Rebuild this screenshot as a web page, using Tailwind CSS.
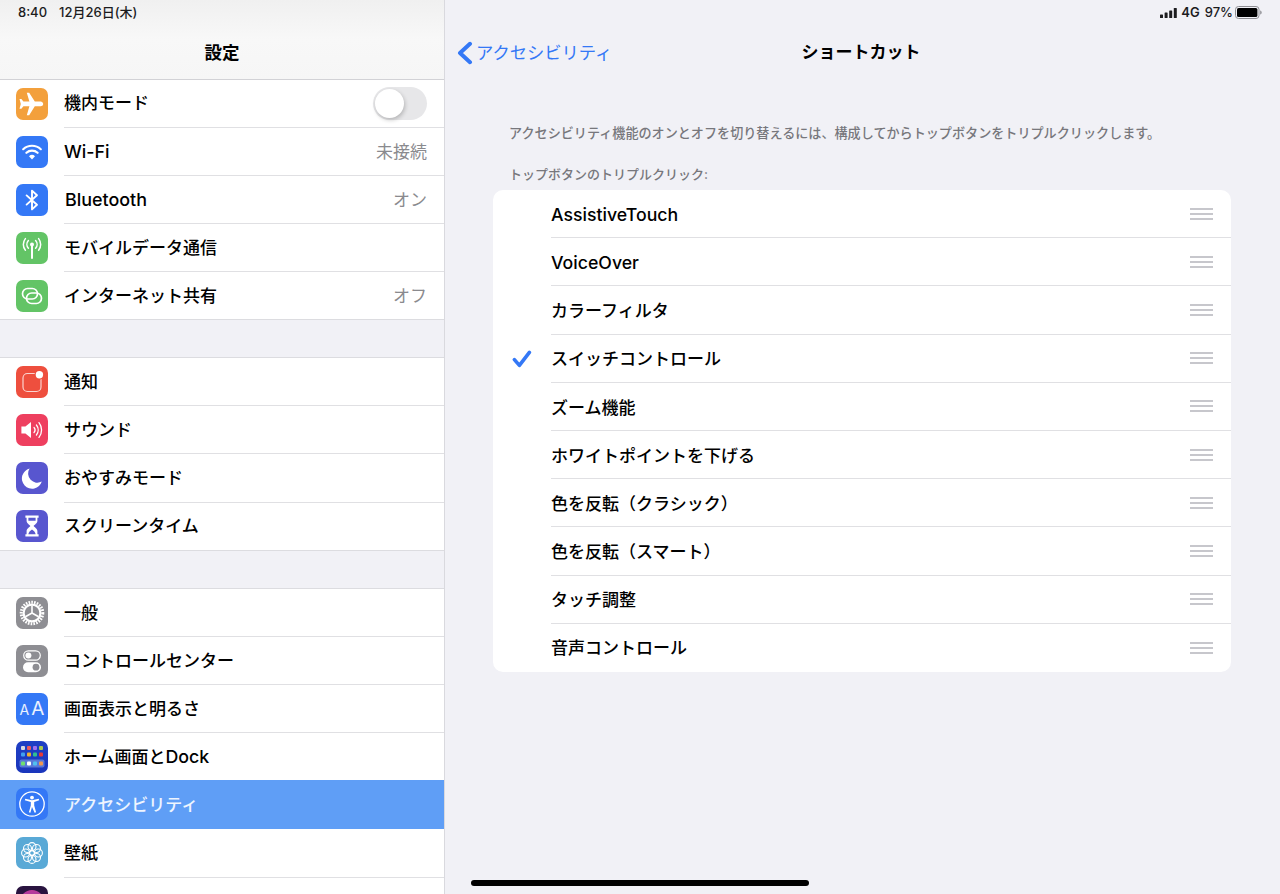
<!DOCTYPE html>
<html lang="ja">
<head>
<meta charset="UTF-8">
<title>設定</title>
<script src="https://cdn.jsdelivr.net/npm/@tailwindcss/browser@4"></script>
</head>
<body class="bg-[#f1f1f6]">
<div class="relative flex h-[894px] w-[1280px] overflow-hidden bg-[#f1f1f6] font-['Inter','Noto_Sans_CJK_JP',sans-serif] text-black">

  <!-- sidebar -->
  <aside class="h-full w-[445px] shrink-0 overflow-hidden border-r border-[#d9d9de]">
    <header class="h-20 border-b border-[#d2d2d6] bg-gradient-to-b from-[#f0f0f0] via-[#f8f8f8] to-[#f6f6f6]">
      <div class="flex h-[25px] items-center pl-[18px] text-[13px] leading-none font-medium text-[#1c1c1e]">
        <span>8:40</span><span class="ml-[12px]">12月26日(木)</span>
      </div>
      <h1 class="mt-[15px] text-center text-[17.5px] leading-[26px] font-semibold">設定</h1>
    </header>

    <section class="bg-white">
      <div class="flex h-12 items-center pl-4">
        <span class="flex size-8 shrink-0 items-center justify-center rounded-[7px] bg-[#f3a03c]">
          <svg viewBox="0 0 32 32" class="size-8"><path fill="#fff" transform="rotate(90 16 16) translate(4.2 3.6)" d="M23 17.6v-2.4l-9-5.6V3.6C14 2.7 13 1.2 11.7 1.2S9.4 2.7 9.4 3.6v6L.6 15.2v2.4l8.8-2.6v6l-2.6 2v1.9l4.9-1.3 4.9 1.3V23l-2.6-2v-6z"/></svg>
        </span>
        <div class="ml-4 flex h-full min-w-0 flex-1 items-center justify-between border-b border-[#e0e0e3] pr-[17px] text-[17px] font-medium">
          <span>機内モード</span>
          <span class="relative mr-0 h-[33px] w-[54px] rounded-full bg-[#e7e7e9]">
            <span class="absolute top-[2px] left-[2px] size-[29px] rounded-full bg-white shadow-[1px_2px_4px_rgba(0,0,0,0.22)]"></span>
          </span>
        </div>
      </div>
      <div class="flex h-12 items-center pl-4">
        <span class="flex size-8 shrink-0 items-center justify-center rounded-[7px] bg-[#3478f6]">
          <svg viewBox="0 0 32 32" class="size-8" fill="none" stroke="#fff" stroke-width="2.2" stroke-linecap="round"><path d="M7.2 13.2a13 13 0 0 1 17.6 0"/><path d="M10.4 16.8a8.4 8.4 0 0 1 11.2 0"/><path fill="#fff" stroke="none" d="M13 20.2a4.4 4.4 0 0 1 6 0L16 23.4z"/></svg>
        </span>
        <div class="ml-4 flex h-full min-w-0 flex-1 items-center justify-between border-b border-[#e0e0e3] pr-[17px] text-[17px] font-medium">
          <span class="pt-[2px] text-[17.8px]">Wi-Fi</span><span class="pt-[2px] font-normal text-[#8a8a8e]">未接続</span>
        </div>
      </div>
      <div class="flex h-12 items-center pl-4">
        <span class="flex size-8 shrink-0 items-center justify-center rounded-[7px] bg-[#3478f6]">
          <svg viewBox="0 0 32 32" class="size-8" fill="none" stroke="#fff" stroke-width="1.9" stroke-linejoin="round" stroke-linecap="round"><path d="M10.6 11.4l10.4 9.4-5 4.6V6.6l5 4.6-10.4 9.4"/></svg>
        </span>
        <div class="ml-4 flex h-full min-w-0 flex-1 items-center justify-between border-b border-[#e0e0e3] pr-[17px] text-[17px] font-medium">
          <span class="ml-px pt-[2px] text-[17.9px]">Bluetooth</span><span class="pt-[2px] font-normal text-[#8a8a8e]">オン</span>
        </div>
      </div>
      <div class="flex h-12 items-center pl-4">
        <span class="flex size-8 shrink-0 items-center justify-center rounded-[7px] bg-[#63c466]">
          <svg viewBox="0 0 32 32" class="size-8" fill="none" stroke="#fff" stroke-width="1.5" stroke-linecap="round"><circle cx="16" cy="12.4" r="2" fill="#fff" stroke="none"/><path d="M16 13v13" stroke-width="2"/><path d="M12.4 8.6a5.6 5.6 0 0 0 0 7.6M19.6 8.6a5.6 5.6 0 0 1 0 7.6"/><path d="M9.4 6.6a9.2 9.2 0 0 0 0 11.6M22.6 6.6a9.2 9.2 0 0 1 0 11.6"/></svg>
        </span>
        <div class="ml-4 flex h-full min-w-0 flex-1 items-center border-b border-[#e0e0e3] text-[17px] font-medium">
          <span class="pt-[2px]">モバイルデータ通信</span>
        </div>
      </div>
      <div class="flex h-12 items-center border-b border-[#dcdce0] pl-4">
        <span class="flex size-8 shrink-0 items-center justify-center rounded-[7px] bg-[#63c466]">
          <svg viewBox="0 0 32 32" class="size-8" fill="none" stroke="#fff" stroke-width="1.7"><rect x="6.5" y="8.5" width="15" height="10.5" rx="5.2"/><rect x="10.5" y="13" width="15" height="10.5" rx="5.2"/></svg>
        </span>
        <div class="ml-4 flex h-full min-w-0 flex-1 items-center justify-between pr-[17px] text-[17px] font-medium">
          <span class="pt-[2px]">インターネット共有</span><span class="pt-[2px] font-normal text-[#8a8a8e]">オフ</span>
        </div>
      </div>
    </section>

    <section class="mt-[37px] border-t border-[#dcdce0] bg-white">
      <div class="flex h-[48.2px] items-center pl-4">
        <span class="flex size-8 shrink-0 items-center justify-center rounded-[7px] bg-[#ee4f3e]">
          <svg viewBox="0 0 32 32" class="size-8" fill="none"><rect x="7" y="7.5" width="18" height="18" rx="4.5" stroke="#fff" stroke-opacity=".75" stroke-width="1.2"/><circle cx="23.4" cy="8.8" r="4.9" fill="#ee4f3e"/><circle cx="23.4" cy="8.8" r="3.7" fill="#fff"/></svg>
        </span>
        <div class="ml-4 flex h-full min-w-0 flex-1 items-center border-b border-[#e0e0e3] text-[17px] font-medium"><span class="pt-[2px]">通知</span></div>
      </div>
      <div class="flex h-[48.2px] items-center pl-4">
        <span class="flex size-8 shrink-0 items-center justify-center rounded-[7px] bg-[#ee3f5f]">
          <svg viewBox="0 0 32 32" class="size-8" fill="none" stroke="#fff" stroke-linecap="round"><path fill="#fff" stroke="none" d="M5.4 12.6h4L15 8v16l-5.6-4.6h-4z"/><path d="M18 13.4a4 4 0 0 1 0 5.2" stroke-width="1.3"/><path d="M20.4 11a8 8 0 0 1 0 10" stroke-width="1.3"/><path d="M23 8.6a12 12 0 0 1 0 14.8" stroke-width="1.3"/></svg>
        </span>
        <div class="ml-4 flex h-full min-w-0 flex-1 items-center border-b border-[#e0e0e3] text-[17px] font-medium"><span class="pt-[2px]">サウンド</span></div>
      </div>
      <div class="flex h-[48.2px] items-center pl-4">
        <span class="flex size-8 shrink-0 items-center justify-center rounded-[7px] bg-[#5856cf]">
          <svg viewBox="0 0 32 32" class="size-8"><path fill="#fff" d="M13.6 6.6a10.2 10.2 0 1 0 12.2 13 9.2 9.2 0 0 1-12.2-13z"/></svg>
        </span>
        <div class="ml-4 flex h-full min-w-0 flex-1 items-center border-b border-[#e0e0e3] text-[17px] font-medium"><span class="pt-[2px]">おやすみモード</span></div>
      </div>
      <div class="flex h-[48.2px] items-center border-b border-[#dcdce0] pl-4">
        <span class="flex size-8 shrink-0 items-center justify-center rounded-[7px] bg-[#5856cf]">
          <svg viewBox="0 0 32 32" class="size-8"><path fill="#fff" fill-rule="evenodd" d="M9.4 5.6h13.2v2.2h-1.2v3c0 2.6-2.8 3.8-3.8 5.2 1 1.4 3.8 2.6 3.8 5.2v3h1.2v2.2H9.4v-2.2h1.2v-3c0-2.6 2.8-3.8 3.8-5.2-1-1.4-3.8-2.6-3.8-5.2v-3H9.4zM12.4 7.8v3h7.2v-3zM12.4 24.2h7.2c0-2-2-3.6-3.6-4.8-1.6 1.2-3.6 2.8-3.6 4.8z"/></svg>
        </span>
        <div class="ml-4 flex h-full min-w-0 flex-1 items-center text-[17px] font-medium"><span class="pt-[2px]">スクリーンタイム</span></div>
      </div>
    </section>

    <section class="mt-[37px] border-t border-[#dcdce0] bg-white">
      <div class="flex h-12 items-center pl-4">
        <span class="flex size-8 shrink-0 items-center justify-center rounded-[7px] bg-[#8e8e93]">
          <svg viewBox="0 0 32 32" class="size-8" fill="none" stroke="#fff"><circle cx="16" cy="16" r="10.8" stroke-width="3" stroke-dasharray="1.6 1.17"/><circle cx="16" cy="16" r="8.4" stroke-width="2.2"/><path d="M16 16V8.4M16 16l-6.6 3.8M16 16l6.6 3.8" stroke-width="1.6"/></svg>
        </span>
        <div class="ml-4 flex h-full min-w-0 flex-1 items-center border-b border-[#e0e0e3] text-[17px] font-medium"><span class="pt-[2px]">一般</span></div>
      </div>
      <div class="flex h-12 items-center pl-4">
        <span class="flex size-8 shrink-0 items-center justify-center rounded-[7px] bg-[#8e8e93]">
          <svg viewBox="0 0 32 32" class="size-8"><rect x="7.7" y="5.8" width="16.6" height="9.4" rx="4.7" fill="none" stroke="#fff" stroke-width="1.2"/><circle cx="12.4" cy="10.5" r="3" fill="#fff"/><rect x="7" y="17.2" width="18" height="10" rx="5" fill="#fff"/><circle cx="20" cy="22.2" r="3.4" fill="#8e8e93"/></svg>
        </span>
        <div class="ml-4 flex h-full min-w-0 flex-1 items-center border-b border-[#e0e0e3] text-[17px] font-medium"><span class="pt-[2px]">コントロールセンター</span></div>
      </div>
      <div class="flex h-12 items-center pl-4">
        <span class="flex size-8 shrink-0 items-center justify-center rounded-[7px] bg-[#3478f6] font-normal text-white/90">
          <span class="flex items-baseline leading-none"><span class="text-[14px]">A</span><span class="ml-[2px] text-[19px]">A</span></span>
        </span>
        <div class="ml-4 flex h-full min-w-0 flex-1 items-center border-b border-[#e0e0e3] text-[17px] font-medium"><span class="pt-[2px]">画面表示と明るさ</span></div>
      </div>
      <div class="flex h-12 items-center pl-4">
        <span class="flex size-8 shrink-0 items-center justify-center rounded-[7px] bg-gradient-to-b from-[#1f3fc4] to-[#1a36bc]">
          <svg viewBox="0 0 32 32" class="size-8"><g><rect x="5" y="5" width="4" height="4" rx="1" fill="#d8d8e0"/><rect x="11" y="5" width="4" height="4" rx="1" fill="#ef5a5a"/><rect x="17" y="5" width="4" height="4" rx="1" fill="#a070f0"/><rect x="23" y="5" width="4" height="4" rx="1" fill="#a8c850"/><rect x="5" y="11.5" width="4" height="4" rx="1" fill="#3fa0f0"/><rect x="11" y="11.5" width="4" height="4" rx="1" fill="#f0b030"/><rect x="17" y="11.5" width="4" height="4" rx="1" fill="#30c090"/><rect x="23" y="11.5" width="4" height="4" rx="1" fill="#e83838"/><rect x="3.5" y="18.5" width="25" height="8" rx="2" fill="#5878d8"/><rect x="5" y="20.5" width="4" height="4" rx="1" fill="#70e070"/><rect x="11" y="20.5" width="4" height="4" rx="1" fill="#fff"/><rect x="17" y="20.5" width="4" height="4" rx="1" fill="#50c0f0"/><rect x="23" y="20.5" width="4" height="4" rx="1" fill="#f09850"/></g></svg>
        </span>
        <div class="ml-4 flex h-full min-w-0 flex-1 items-center border-b border-[#e0e0e3] text-[17px] font-medium"><span class="pt-[2px]">ホーム画面と<span class="text-[17.8px]">Dock</span></span></div>
      </div>
      <div class="relative -mt-px flex h-[49px] items-center bg-[#5f9ef6] pl-4">
        <span class="flex size-8 shrink-0 items-center justify-center rounded-[7px] bg-[#3478f6]">
          <svg viewBox="0 0 32 32" class="size-8" fill="none" stroke="#fff"><circle cx="16" cy="16" r="12.2" stroke-width="1.3"/><circle cx="16" cy="9.6" r="1.9" fill="#fff" stroke="none"/><path fill="#fff" stroke="none" d="M8.8 12.2l.5-1.4 6.7 1.5 6.7-1.5.5 1.4-5 1.8v3.4l1.9 6.8-1.5.5L16 19l-1.6 5.7-1.5-.5 1.9-6.8V14z"/></svg>
        </span>
        <div class="ml-4 flex h-full min-w-0 flex-1 items-center text-[17px] font-medium text-white/90"><span class="pt-[2px]">アクセシビリティ</span></div>
      </div>
      <div class="flex h-[49px] items-center pl-4">
        <span class="flex size-8 shrink-0 items-center justify-center rounded-[7px] bg-[#59a9d6]">
          <svg viewBox="0 0 32 32" class="size-8" fill="none" stroke="#fff" stroke-width="1.1"><circle cx="16" cy="16" r="2.4"/><circle cx="16" cy="9.6" r="4"/><circle cx="16" cy="22.4" r="4"/><circle cx="9.6" cy="16" r="4"/><circle cx="22.4" cy="16" r="4"/><circle cx="11.5" cy="11.5" r="4"/><circle cx="20.5" cy="11.5" r="4"/><circle cx="11.5" cy="20.5" r="4"/><circle cx="20.5" cy="20.5" r="4"/></svg>
        </span>
        <div class="ml-4 flex h-full min-w-0 flex-1 items-center border-b border-[#e0e0e3] text-[17px] font-medium"><span class="pt-[2px]">壁紙</span></div>
      </div>
      <div class="flex h-12 items-center pl-4">
        <span class="flex size-8 shrink-0 items-center justify-center rounded-[7px] bg-[#2a1440]">
          <span class="size-6 rounded-full bg-gradient-to-b from-[#c0389a] to-[#5a2aa8]"></span>
        </span>
      </div>
    </section>
  </aside>

  <!-- detail -->
  <main class="min-w-0 flex-1">
    <div class="flex h-[25px] items-center justify-end gap-[5px] pr-[18px] text-[13px] leading-none font-medium text-[#1c1c1e]">
      <svg viewBox="0 0 17 10" class="h-[10px] w-[17px]" fill="#1c1c1e"><rect x="0" y="6.5" width="3" height="3.5" rx=".6"/><rect x="4.6" y="4.5" width="3" height="5.5" rx=".6"/><rect x="9.2" y="2.5" width="3" height="7.5" rx=".6"/><rect x="13.8" y="0" width="3" height="10" rx=".6"/></svg>
      <span class="-ml-px font-semibold">4G</span>
      <span>97%</span>
      <svg viewBox="0 0 27 13" class="-ml-[3px] h-[13px] w-[27px]"><rect x=".5" y=".5" width="23.5" height="12" rx="3" fill="none" stroke="#8e8e93"/><rect x="2" y="2" width="20.4" height="9" rx="1.6" fill="#000"/><path d="M25.2 4.4c.9.2 1.5 1.1 1.5 2.1s-.6 1.9-1.5 2.1z" fill="#8e8e93"/></svg>
    </div>
    <div class="relative mt-[15px] flex h-[26px] items-center justify-center">
      <a class="absolute top-0 left-[12px] flex h-full items-center text-[17.3px] font-normal text-[#3478f6]">
        <svg viewBox="0 0 16 24" class="h-6 w-4" fill="none" stroke="#3478f6" stroke-width="4" stroke-linecap="round" stroke-linejoin="round"><path d="M13 2.8L3 12l10 9.2"/></svg>
        <span class="ml-[3px]">アクセシビリティ</span>
      </a>
      <h2 class="-ml-[3px] text-[17px] font-semibold">ショートカット</h2>
    </div>

    <p class="mt-[57px] pl-[64px] text-[13.1px] leading-[20px] font-medium text-[#77777c]">アクセシビリティ機能のオンとオフを切り替えるには、構成してからトップボタンをトリプルクリックします。</p>
    <p class="mt-[21px] pl-[64px] text-[13px] leading-[20px] font-medium text-[#77777c]">トップボタンのトリプルクリック:</p>

    <ul class="mt-[6px] ml-[48px] w-[738px] rounded-[10px] bg-white text-[17px] font-medium">
      <li class="flex h-[48.2px] items-center pl-[58px]"><div class="flex h-full flex-1 items-center justify-between border-b border-[#e0e0e3] pr-[18px]"><span class="pt-[4px] text-[17.7px]">AssistiveTouch</span><span class="flex w-[23px] flex-col gap-[3px]"><i class="h-[2px] bg-[#c7c7cc]"></i><i class="h-[2px] bg-[#c7c7cc]"></i><i class="h-[2px] bg-[#c7c7cc]"></i></span></div></li>
      <li class="flex h-[48.2px] items-center pl-[58px]"><div class="flex h-full flex-1 items-center justify-between border-b border-[#e0e0e3] pr-[18px]"><span class="pt-[2px] text-[17.7px]">VoiceOver</span><span class="flex w-[23px] flex-col gap-[3px]"><i class="h-[2px] bg-[#c7c7cc]"></i><i class="h-[2px] bg-[#c7c7cc]"></i><i class="h-[2px] bg-[#c7c7cc]"></i></span></div></li>
      <li class="flex h-[48.2px] items-center pl-[58px]"><div class="flex h-full flex-1 items-center justify-between border-b border-[#e0e0e3] pr-[18px]"><span class="pt-[4px]">カラーフィルタ</span><span class="flex w-[23px] flex-col gap-[3px]"><i class="h-[2px] bg-[#c7c7cc]"></i><i class="h-[2px] bg-[#c7c7cc]"></i><i class="h-[2px] bg-[#c7c7cc]"></i></span></div></li>
      <li class="relative flex h-[48.2px] items-center pl-[58px]">
        <svg viewBox="0 0 20 18" class="absolute top-[15px] left-[19px] h-[18px] w-5" fill="none" stroke="#3478f6" stroke-width="3.6" stroke-linecap="round" stroke-linejoin="round"><path d="M2.4 9.6L7.4 15.4 17.4 2.4"/></svg>
        <div class="flex h-full flex-1 items-center justify-between border-b border-[#e0e0e3] pr-[18px]"><span class="pt-[4px]">スイッチコントロール</span><span class="flex w-[23px] flex-col gap-[3px]"><i class="h-[2px] bg-[#c7c7cc]"></i><i class="h-[2px] bg-[#c7c7cc]"></i><i class="h-[2px] bg-[#c7c7cc]"></i></span></div>
      </li>
      <li class="flex h-[48.2px] items-center pl-[58px]"><div class="flex h-full flex-1 items-center justify-between border-b border-[#e0e0e3] pr-[18px]"><span class="pt-[4px]">ズーム機能</span><span class="flex w-[23px] flex-col gap-[3px]"><i class="h-[2px] bg-[#c7c7cc]"></i><i class="h-[2px] bg-[#c7c7cc]"></i><i class="h-[2px] bg-[#c7c7cc]"></i></span></div></li>
      <li class="flex h-[48.2px] items-center pl-[58px]"><div class="flex h-full flex-1 items-center justify-between border-b border-[#e0e0e3] pr-[18px]"><span class="pt-[4px]">ホワイトポイントを下げる</span><span class="flex w-[23px] flex-col gap-[3px]"><i class="h-[2px] bg-[#c7c7cc]"></i><i class="h-[2px] bg-[#c7c7cc]"></i><i class="h-[2px] bg-[#c7c7cc]"></i></span></div></li>
      <li class="flex h-[48.2px] items-center pl-[58px]"><div class="flex h-full flex-1 items-center justify-between border-b border-[#e0e0e3] pr-[18px]"><span class="pt-[4px]">色を反転（クラシック）</span><span class="flex w-[23px] flex-col gap-[3px]"><i class="h-[2px] bg-[#c7c7cc]"></i><i class="h-[2px] bg-[#c7c7cc]"></i><i class="h-[2px] bg-[#c7c7cc]"></i></span></div></li>
      <li class="flex h-[48.2px] items-center pl-[58px]"><div class="flex h-full flex-1 items-center justify-between border-b border-[#e0e0e3] pr-[18px]"><span class="pt-[4px]">色を反転（スマート）</span><span class="flex w-[23px] flex-col gap-[3px]"><i class="h-[2px] bg-[#c7c7cc]"></i><i class="h-[2px] bg-[#c7c7cc]"></i><i class="h-[2px] bg-[#c7c7cc]"></i></span></div></li>
      <li class="flex h-[48.2px] items-center pl-[58px]"><div class="flex h-full flex-1 items-center justify-between border-b border-[#e0e0e3] pr-[18px]"><span class="pt-[4px]">タッチ調整</span><span class="flex w-[23px] flex-col gap-[3px]"><i class="h-[2px] bg-[#c7c7cc]"></i><i class="h-[2px] bg-[#c7c7cc]"></i><i class="h-[2px] bg-[#c7c7cc]"></i></span></div></li>
      <li class="flex h-[48.2px] items-center pl-[58px]"><div class="flex h-full flex-1 items-center justify-between pr-[18px]"><span class="pt-[2px]">音声コントロール</span><span class="flex w-[23px] flex-col gap-[3px]"><i class="h-[2px] bg-[#c7c7cc]"></i><i class="h-[2px] bg-[#c7c7cc]"></i><i class="h-[2px] bg-[#c7c7cc]"></i></span></div></li>
    </ul>
  </main>

  <!-- home indicator -->
  <div class="absolute bottom-[8px] left-[471px] h-[6px] w-[338px] rounded-full bg-black"></div>
</div>
</body>
</html>
